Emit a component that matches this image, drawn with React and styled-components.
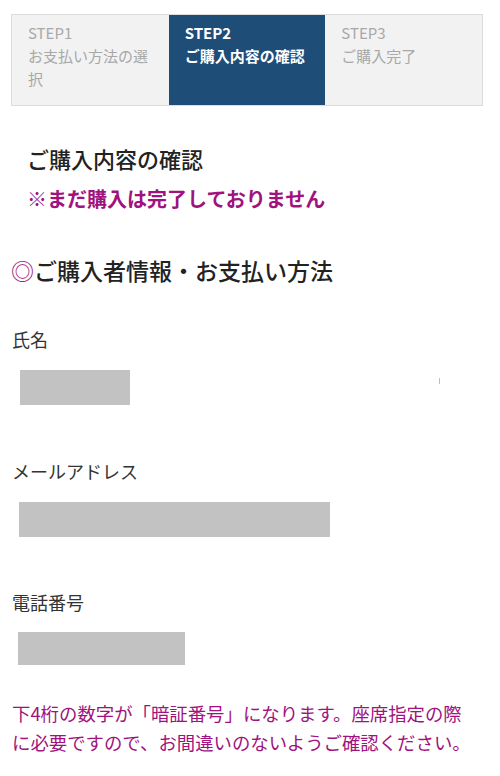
import styled, { createGlobalStyle } from "styled-components";

const GlobalStyle = createGlobalStyle`
  body {
    margin: 0;
    background: #ffffff;
    font-family: "Noto Sans CJK JP", "Noto Sans", sans-serif;
    color: #333333;
  }
`;

const Page = styled.div`
  width: 500px;
  padding-top: 14px;
  padding-bottom: 20px;
`;

const Steps = styled.ol`
  display: grid;
  grid-template-columns: repeat(3, 1fr);
  width: 472px;
  margin: 0 0 0 11px;
  padding: 0;
  list-style: none;
  border: 1px solid #dcdcdc;
  box-sizing: border-box;
  background: #f2f2f2;
`;

const Step = styled.li`
  padding: 6px 16px 15px;
  font-size: 15px;
  line-height: 23px;
  font-weight: ${(p) => (p.$active ? 700 : 400)};
  color: ${(p) => (p.$active ? "#ffffff" : "#a8a8a8")};
  background: ${(p) => (p.$active ? "#1e4d78" : "transparent")};
`;

const Intro = styled.div`
  margin-top: 33px;
  padding-left: 27px;
`;

const Title = styled.h1`
  margin: 0;
  font-size: 22px;
  line-height: 38px;
  font-weight: 500;
  color: #222222;
`;

const Warning = styled.p`
  margin: 3px 0 0;
  font-size: 20px;
  line-height: 38px;
  font-weight: 700;
  color: #a0127e;
`;

const SectionTitle = styled.h2`
  margin: 34px 0 0 11px;
  font-size: 23px;
  line-height: 36px;
  font-weight: 500;
  color: #222222;
`;

const Mark = styled.span`
  color: #a0127e;
  font-weight: 400;
`;

const Field = styled.div`
  margin-top: ${(p) => p.$gap}px;
  padding-left: 12px;
`;

const Label = styled.div`
  font-size: 18px;
  line-height: 28px;
  color: #333333;
`;

const ValueRow = styled.div`
  display: flex;
  align-items: flex-start;
  margin-top: ${(p) => p.$gap}px;
  padding-left: ${(p) => p.$indent}px;
`;

const Masked = styled.div`
  width: ${(p) => p.$w}px;
  height: ${(p) => p.$h}px;
  background: #c2c2c2;
`;

const Tick = styled.span`
  width: 1px;
  height: 6px;
  margin-top: 8px;
  margin-left: ${(p) => p.$offset}px;
  background: #bdbdbd;
`;

const Notice = styled.p`
  width: 462px;
  margin: 34px 0 0 12px;
  font-size: 18.4px;
  line-height: 29px;
  color: #a0127e;
`;

export default function App() {
  return (
    <>
      <GlobalStyle />
      <Page>
        <Steps>
          <Step>
            STEP1
            <br />
            お支払い方法の選択
          </Step>
          <Step $active>
            STEP2
            <br />
            ご購入内容の確認
          </Step>
          <Step>
            STEP3
            <br />
            ご購入完了
          </Step>
        </Steps>

        <Intro>
          <Title>ご購入内容の確認</Title>
          <Warning>※まだ購入は完了しておりません</Warning>
        </Intro>

        <SectionTitle>
          <Mark>◎</Mark>ご購入者情報・お支払い方法
        </SectionTitle>

        <Field $gap={37}>
          <Label>氏名</Label>
          <ValueRow $gap={17} $indent={8}>
            <Masked $w={110} $h={35} />
            <Tick $offset={309} />
          </ValueRow>
        </Field>

        <Field $gap={52}>
          <Label>メールアドレス</Label>
          <ValueRow $gap={17} $indent={7}>
            <Masked $w={311} $h={35} />
          </ValueRow>
        </Field>

        <Field $gap={51}>
          <Label>電話番号</Label>
          <ValueRow $gap={16} $indent={6}>
            <Masked $w={167} $h={33} />
          </ValueRow>
        </Field>

        <Notice>
          下4桁の数字が「暗証番号」になります。座席指定の際に必要ですので、お間違いのないようご確認ください。
        </Notice>
      </Page>
    </>
  );
}
